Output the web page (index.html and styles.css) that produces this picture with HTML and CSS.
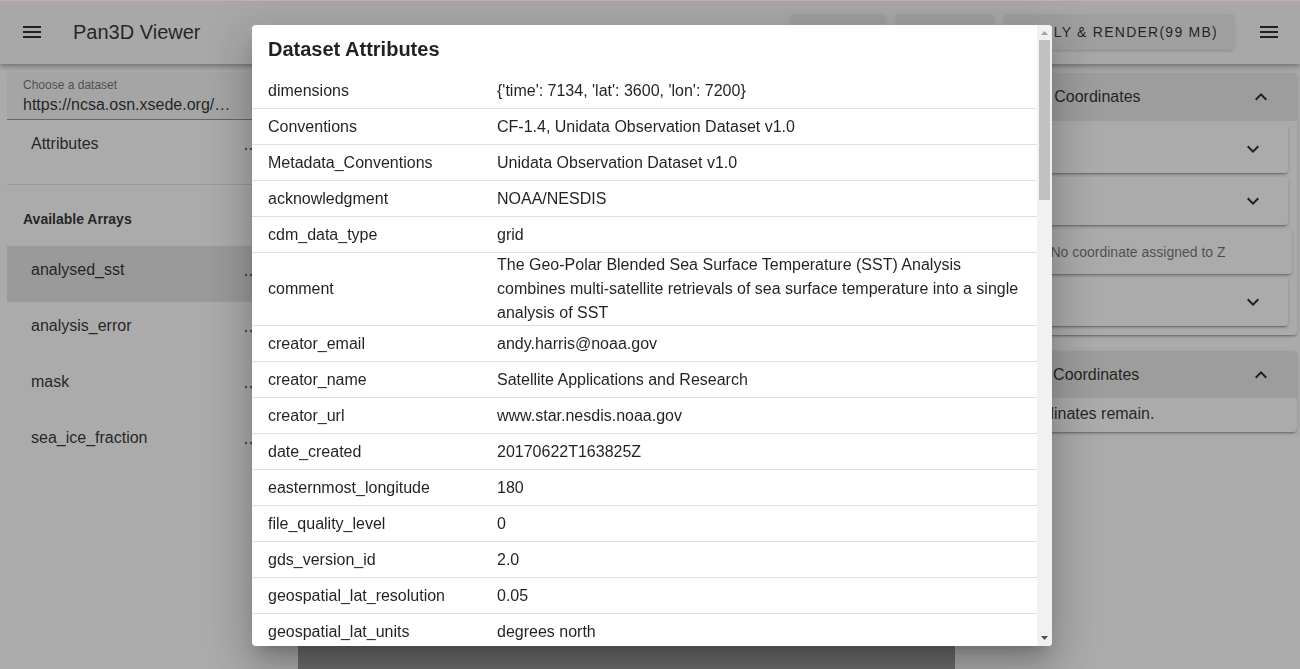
FILE: index.html
```html
<!DOCTYPE html>
<html lang="en">
<head>
<meta charset="utf-8">
<title>Pan3D Viewer</title>
<link rel="stylesheet" href="styles.css">
</head>
<body>
<div class="app">
  <header class="appbar">
    <button class="nav-btn" aria-label="menu">
      <svg viewBox="0 0 24 24" width="24" height="24"><path d="M3,6H21V8H3V6M3,11H21V13H3V11M3,16H21V18H3V16Z"/></svg>
    </button>
    <div class="app-title">Pan3D Viewer</div>
    <div class="actions">
      <button class="btn btn-1">RESET</button>
      <button class="btn btn-2">EXPORT</button>
      <button class="btn btn-3">APPLY &amp; RENDER(99 MB)</button>
      <button class="nav-btn nav-right" aria-label="menu">
        <svg viewBox="0 0 24 24" width="24" height="24"><path d="M3,6H21V8H3V6M3,11H21V13H3V11M3,16H21V18H3V16Z"/></svg>
      </button>
    </div>
  </header>
  <div class="layout">
    <aside class="drawer">
      <div class="field">
        <div class="field-label">Choose a dataset</div>
        <div class="field-value">https://ncsa.osn.xsede.org/Pangeo/pangeo-forge/noaa-geopolar-sst</div>
      </div>
      <div class="item"><span class="item-text">Attributes</span><svg class="dots" viewBox="0 0 14 4" width="14" height="4"><circle cx="2" cy="2" r="1.2"/><circle cx="7" cy="2" r="1.2"/><circle cx="12" cy="2" r="1.2"/></svg></div>
      <div class="divider"></div>
      <div class="subheader">Available Arrays</div>
      <div class="item active"><span class="item-text">analysed_sst</span><svg class="dots" viewBox="0 0 14 4" width="14" height="4"><circle cx="2" cy="2" r="1.2"/><circle cx="7" cy="2" r="1.2"/><circle cx="12" cy="2" r="1.2"/></svg></div>
      <div class="item"><span class="item-text">analysis_error</span><svg class="dots" viewBox="0 0 14 4" width="14" height="4"><circle cx="2" cy="2" r="1.2"/><circle cx="7" cy="2" r="1.2"/><circle cx="12" cy="2" r="1.2"/></svg></div>
      <div class="item"><span class="item-text">mask</span><svg class="dots" viewBox="0 0 14 4" width="14" height="4"><circle cx="2" cy="2" r="1.2"/><circle cx="7" cy="2" r="1.2"/><circle cx="12" cy="2" r="1.2"/></svg></div>
      <div class="item"><span class="item-text">sea_ice_fraction</span><svg class="dots" viewBox="0 0 14 4" width="14" height="4"><circle cx="2" cy="2" r="1.2"/><circle cx="7" cy="2" r="1.2"/><circle cx="12" cy="2" r="1.2"/></svg></div>
    </aside>
    <main class="main">
      <div class="render"></div>
    </main>
    <section class="side">
      <div class="panel">
        <div class="panel-head"><span>Assigned Coordinates</span><svg viewBox="0 0 24 24" width="24" height="24"><path d="M7.41,15.41L12,10.83L16.59,15.41L18,14L12,8L6,14L7.41,15.41Z"/></svg></div>
        <div class="panel-body">
          <div class="sub"><svg viewBox="0 0 24 24" width="24" height="24"><path d="M7.41,8.58L12,13.17L16.59,8.58L18,10L12,16L6,10L7.41,8.58Z"/></svg></div>
          <div class="sub"><svg viewBox="0 0 24 24" width="24" height="24"><path d="M7.41,8.58L12,13.17L16.59,8.58L18,10L12,16L6,10L7.41,8.58Z"/></svg></div>
          <div class="sub-note">No coordinate assigned to Z</div>
          <div class="sub"><svg viewBox="0 0 24 24" width="24" height="24"><path d="M7.41,8.58L12,13.17L16.59,8.58L18,10L12,16L6,10L7.41,8.58Z"/></svg></div>
        </div>
      </div>
      <div class="panel panel-2">
        <div class="panel-head head-2"><span>Available Coordinates</span><svg viewBox="0 0 24 24" width="24" height="24"><path d="M7.41,15.41L12,10.83L16.59,15.41L18,14L12,8L6,14L7.41,15.41Z"/></svg></div>
        <div class="panel-text">No coordinates remain.</div>
      </div>
    </section>
  </div>
</div>
<div class="topline"></div>
<div class="scrim"></div>
<div class="dialog">
  <div class="dialog-content">
    <div class="dialog-title">Dataset Attributes</div>
    <table class="attrs">
      <colgroup><col class="c-key"><col></colgroup>
      <tbody>
        <tr><td>dimensions</td><td>{'time': 7134, 'lat': 3600, 'lon': 7200}</td></tr>
        <tr><td>Conventions</td><td>CF-1.4, Unidata Observation Dataset v1.0</td></tr>
        <tr><td>Metadata_Conventions</td><td>Unidata Observation Dataset v1.0</td></tr>
        <tr><td>acknowledgment</td><td>NOAA/NESDIS</td></tr>
        <tr><td>cdm_data_type</td><td>grid</td></tr>
        <tr><td>comment</td><td>The Geo-Polar Blended Sea Surface Temperature (SST) Analysis combines multi-satellite retrievals of sea surface temperature into a single analysis of SST</td></tr>
        <tr><td>creator_email</td><td>andy.harris@noaa.gov</td></tr>
        <tr><td>creator_name</td><td>Satellite Applications and Research</td></tr>
        <tr><td>creator_url</td><td>www.star.nesdis.noaa.gov</td></tr>
        <tr><td>date_created</td><td>20170622T163825Z</td></tr>
        <tr><td>easternmost_longitude</td><td>180</td></tr>
        <tr><td>file_quality_level</td><td>0</td></tr>
        <tr><td>gds_version_id</td><td>2.0</td></tr>
        <tr><td>geospatial_lat_resolution</td><td>0.05</td></tr>
        <tr><td>geospatial_lat_units</td><td>degrees north</td></tr>
        <tr><td>geospatial_lon_resolution</td><td>0.05</td></tr>
        <tr><td>geospatial_lon_units</td><td>degrees east</td></tr>
        <tr><td>history</td><td>Created by the NOAA Geo-Polar Blended SST processor</td></tr>
        <tr><td>id</td><td>OSPO-L4-GLOB-Geo_Polar_Blended</td></tr>
        <tr><td>institution</td><td>NOAA/NESDIS/STAR</td></tr>
      </tbody>
    </table>
  </div>
  <div class="scrollbar">
    <div class="sb-btn"><svg viewBox="0 0 15 15" width="15" height="15"><path d="M4,10 L11,10 L7.5,6 Z" class="arrow-up"/></svg></div>
    <div class="sb-track"><div class="sb-thumb"></div></div>
    <div class="sb-btn"><svg viewBox="0 0 15 15" width="15" height="15"><path d="M4,5 L11,5 L7.5,9 Z" class="arrow-down"/></svg></div>
  </div>
</div>
</body>
</html>
```

FILE: styles.css
```css
* { box-sizing: border-box; }

html, body {
  margin: 0;
  padding: 0;
  height: 669px;
  overflow: hidden;
  background: #ffffff;
  font-family: "Liberation Sans", Arial, sans-serif;
  color: rgba(0, 0, 0, 0.87);
}

button {
  font-family: inherit;
  border: none;
  background: none;
  padding: 0;
  cursor: pointer;
}

.app {
  height: 669px;
  display: flex;
  flex-direction: column;
}

/* ---------- app bar ---------- */
.appbar {
  height: 64px;
  flex: 0 0 64px;
  display: flex;
  align-items: center;
  background: #fbfbfb;
  position: relative;
  z-index: 2;
  box-shadow: 0 2px 4px -1px rgba(0,0,0,.2), 0 4px 5px 0 rgba(0,0,0,.14), 0 1px 10px 0 rgba(0,0,0,.12);
}

.nav-btn {
  width: 48px;
  height: 48px;
  margin-left: 8px;
  display: flex;
  align-items: center;
  justify-content: center;
}
.nav-btn svg { fill: rgba(0,0,0,.87); }

.app-title {
  margin-left: 17px;
  font-size: 20px;
  line-height: 28px;
}

.actions {
  margin-left: auto;
  display: flex;
  align-items: center;
  gap: 10px;
  margin-right: 7px;
}

.btn {
  height: 36px;
  border-radius: 4px;
  background: #ececec;
  font-size: 14px;
  letter-spacing: 1.25px;
  color: rgba(0,0,0,.87);
  display: flex;
  align-items: center;
  justify-content: flex-end;
  padding: 0 16px;
  overflow: hidden;
  white-space: nowrap;
  box-shadow: 0 3px 1px -2px rgba(0,0,0,.06), 0 2px 2px 0 rgba(0,0,0,.05), 0 1px 5px 0 rgba(0,0,0,.05);
}
.btn-1 { width: 95px; }
.btn-2 { width: 98px; }
.btn-3 { width: 231px; padding-right: 17px; }
.nav-right { margin-left: 0; }

/* ---------- layout ---------- */
.layout {
  flex: 1;
  display: grid;
  grid-template-columns: 260px 1fr 342px;
  min-height: 0;
}

/* ---------- drawer ---------- */
.drawer {
  padding: 8px 0 0 7px;
}

.field {
  height: 48px;
  background: rgba(0,0,0,.04);
  border-bottom: 1px solid rgba(0,0,0,.42);
  border-radius: 4px 4px 0 0;
  padding: 6px 16px 0 16px;
}
.field-label {
  font-size: 12px;
  line-height: 15px;
  color: rgba(0,0,0,.6);
}
.field-value {
  font-size: 16px;
  line-height: 24px;
  white-space: nowrap;
  overflow: hidden;
  text-overflow: ellipsis;
  width: 211px;
}

.item {
  height: 56px;
  display: flex;
  align-items: center;
  padding-left: 24px;
}
.item.active { background: #e4e4e4; }
.item-text {
  flex: 1;
  align-self: flex-start;
  padding-top: 12px;
  font-size: 16px;
  line-height: 24px;
}
.dots {
  fill: rgba(0,0,0,.6);
  margin-right: 2px;
  margin-top: 2px;
}

.divider {
  margin-top: 8px;
  height: 1px;
  background: rgba(0,0,0,.12);
}

.subheader {
  height: 61px;
  padding: 24px 16px 0 16px;
  font-size: 14px;
  line-height: 20px;
  font-weight: bold;
}

/* ---------- main ---------- */
.main {
  padding: 8px 3px 0 38px;
}
.render {
  height: 100%;
  background: #989898;
}

/* ---------- side ---------- */
.side {
  padding: 9px 3px 0 4px;
}

.panel {
  background: #ffffff;
  border-radius: 4px;
  box-shadow: 0 3px 1px -2px rgba(0,0,0,.2), 0 2px 2px 0 rgba(0,0,0,.14), 0 1px 5px 0 rgba(0,0,0,.12);
  overflow: hidden;
}
.panel-2 { margin-top: 16px; }

.panel-head {
  height: 48px;
  background: #e8e8e8;
  display: flex;
  align-items: center;
  justify-content: space-between;
  padding: 0 24px 0 22px;
  font-size: 16px;
}
.head-2 { height: 47px; }
.panel-head svg, .sub svg { fill: rgba(0,0,0,.87); }

.panel-body {
  padding: 4px 9px 9px 12px;
  display: flex;
  flex-direction: column;
  gap: 4px;
}

.sub {
  height: 48px;
  background: #ffffff;
  border-radius: 4px;
  display: flex;
  align-items: center;
  justify-content: flex-end;
  padding: 0 23px 0 16px;
  box-shadow: 0 3px 1px -2px rgba(0,0,0,.2), 0 2px 2px 0 rgba(0,0,0,.14), 0 1px 5px 0 rgba(0,0,0,.12);
}

.sub-note {
  height: 45px;
  margin-left: 10px;
  margin-right: -4px;
  border-radius: 4px;
  display: flex;
  align-items: center;
  justify-content: center;
  font-size: 14px;
  color: rgba(0,0,0,.6);
  box-shadow: 0 3px 1px -2px rgba(0,0,0,.2), 0 2px 2px 0 rgba(0,0,0,.14), 0 1px 5px 0 rgba(0,0,0,.12);
}

.panel-text {
  padding: 4px 24px 6px 27px;
  font-size: 16px;
  line-height: 24px;
}

/* ---------- overlay ---------- */
.topline {
  position: fixed;
  left: 0;
  top: 0;
  width: 100%;
  height: 1px;
  background: #caa9b8;
  z-index: 20;
}

.scrim {
  position: fixed;
  inset: 0;
  background: rgba(33,33,33,.38);
  z-index: 10;
}

.dialog {
  position: fixed;
  left: 252px;
  top: 25px;
  width: 800px;
  height: 621px;
  background: #ffffff;
  border-radius: 4px;
  overflow: hidden;
  z-index: 11;
  display: flex;
  box-shadow: 0 11px 15px -7px rgba(0,0,0,.2), 0 24px 38px 3px rgba(0,0,0,.14), 0 9px 46px 8px rgba(0,0,0,.12);
}

.dialog-content {
  flex: 1;
  min-width: 0;
  overflow: hidden;
}

.dialog-title {
  padding: 8px 16px;
  font-size: 20px;
  line-height: 32px;
  font-weight: bold;
}

.attrs {
  width: 100%;
  border-collapse: separate;
  border-spacing: 0;
  table-layout: fixed;
  font-size: 16px;
  line-height: 24px;
}
.c-key { width: 229px; }
.attrs td {
  height: 36px;
  padding: 0 16px;
  vertical-align: middle;
  border-bottom: 1px solid #e0e0e0;
  word-wrap: break-word;
}

/* ---------- fake scrollbar ---------- */
.scrollbar {
  flex: 0 0 15px;
  width: 15px;
  background: #f1f1f1;
  display: flex;
  flex-direction: column;
}
.sb-btn {
  height: 15px;
  flex: 0 0 15px;
}
.sb-btn svg { display: block; }
.arrow-up { fill: #a3a3a3; }
.arrow-down { fill: #505050; }
.sb-track {
  flex: 1;
  padding: 0 2px;
}
.sb-thumb {
  height: 160px;
  background: #c1c1c1;
}
```
